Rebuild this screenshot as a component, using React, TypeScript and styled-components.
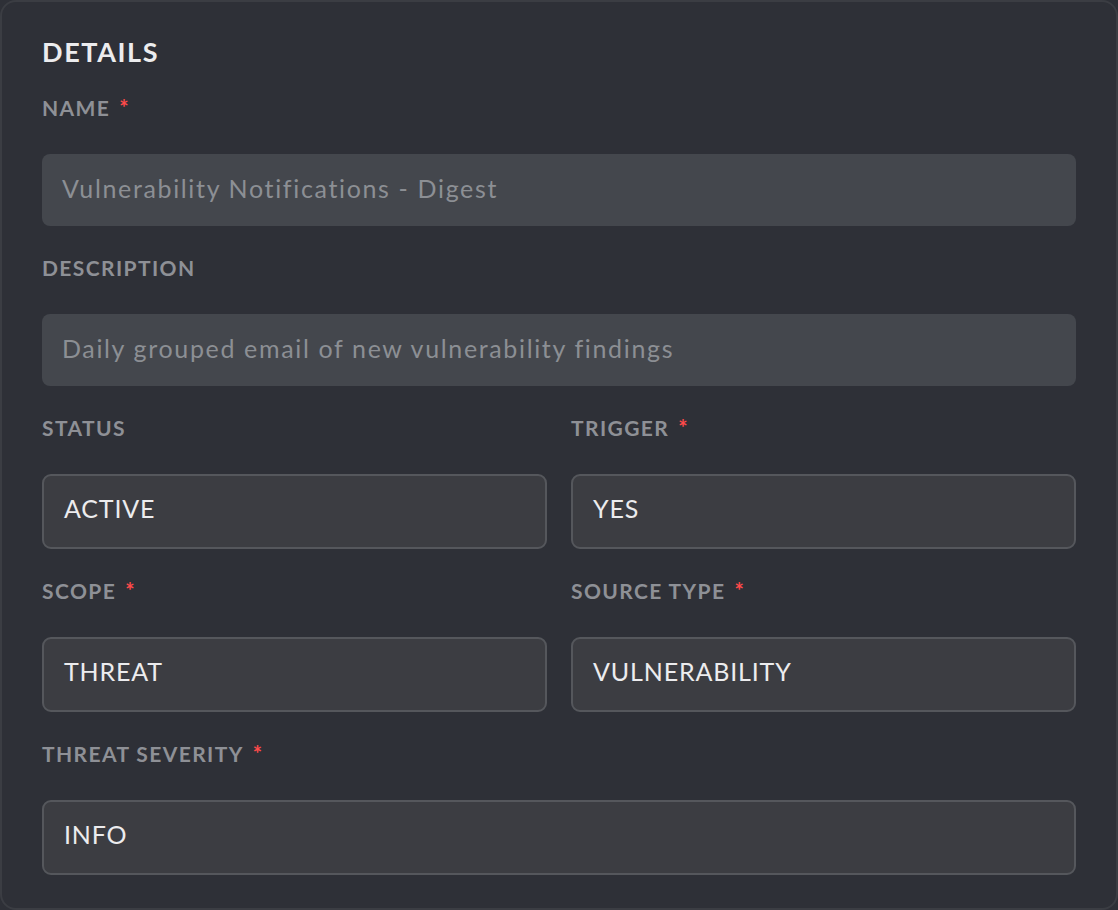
import React from 'react';
import styled, { createGlobalStyle } from 'styled-components';

const GlobalStyle = createGlobalStyle`
  * {
    box-sizing: border-box;
  }

  body {
    margin: 0;
    background-color: #2e3037;
    font-family: Lato, 'Noto Sans', sans-serif;
  }
`;

type FieldProps = {
  label: string;
  value: string;
  required?: boolean;
  kind: 'text' | 'select';
};

function Field({ label, value, required, kind }: FieldProps) {
  return (
    <FieldWrap>
      <Label>
        {label}
        {required && <Required>*</Required>}
      </Label>
      {kind === 'text' ? <TextBox>{value}</TextBox> : <SelectBox>{value}</SelectBox>}
    </FieldWrap>
  );
}

function App() {
  return (
    <>
      <GlobalStyle />
      <Panel>
        <Title>DETAILS</Title>
        <Field label="NAME" required kind="text" value="Vulnerability Notifications - Digest" />
        <Field label="DESCRIPTION" kind="text" value="Daily grouped email of new vulnerability findings" />
        <Row>
          <Field label="STATUS" kind="select" value="ACTIVE" />
          <Field label="TRIGGER" required kind="select" value="YES" />
        </Row>
        <Row>
          <Field label="SCOPE" required kind="select" value="THREAT" />
          <Field label="SOURCE TYPE" required kind="select" value="VULNERABILITY" />
        </Row>
        <Field label="THREAT SEVERITY" required kind="select" value="INFO" />
      </Panel>
    </>
  );
}

export default App;

const Panel = styled.section`
  display: flex;
  flex-direction: column;
  gap: 30px;
  width: 1118px;
  height: 910px;
  padding: 34px 40px 0;
  background-color: #2e3037;
  border: 2px solid #3b3d43;
  border-radius: 16px;
`;

const Title = styled.h2`
  margin: 0 0 -2px;
  font-size: 27px;
  line-height: 32px;
  font-weight: 700;
  color: #ececee;
  letter-spacing: 1.6px;
`;

const FieldWrap = styled.div`
  display: flex;
  flex-direction: column;
`;

const Row = styled.div`
  display: grid;
  grid-template-columns: 1fr 1fr;
  gap: 24px;
`;

const Label = styled.label`
  display: flex;
  align-items: flex-start;
  margin-bottom: 34px;
  font-size: 21px;
  line-height: 24px;
  font-weight: 700;
  color: #8e9096;
  letter-spacing: 1.4px;
`;

const Required = styled.span`
  margin-left: 9px;
  color: #ff4a4a;
  font-size: 22px;
`;

const TextBox = styled.div`
  display: flex;
  align-items: center;
  height: 72px;
  padding: 0 20px 5px;
  border-radius: 8px;
  background-color: #44474d;
  color: #8c8f94;
  font-size: 25px;
  letter-spacing: 1.65px;
`;

const SelectBox = styled.div`
  display: flex;
  align-items: center;
  height: 75px;
  padding: 0 20px 7px;
  border: 2px solid #55575c;
  border-radius: 9px;
  background-color: #3c3d42;
  color: #ececee;
  font-size: 25px;
  letter-spacing: 0.85px;
`;
